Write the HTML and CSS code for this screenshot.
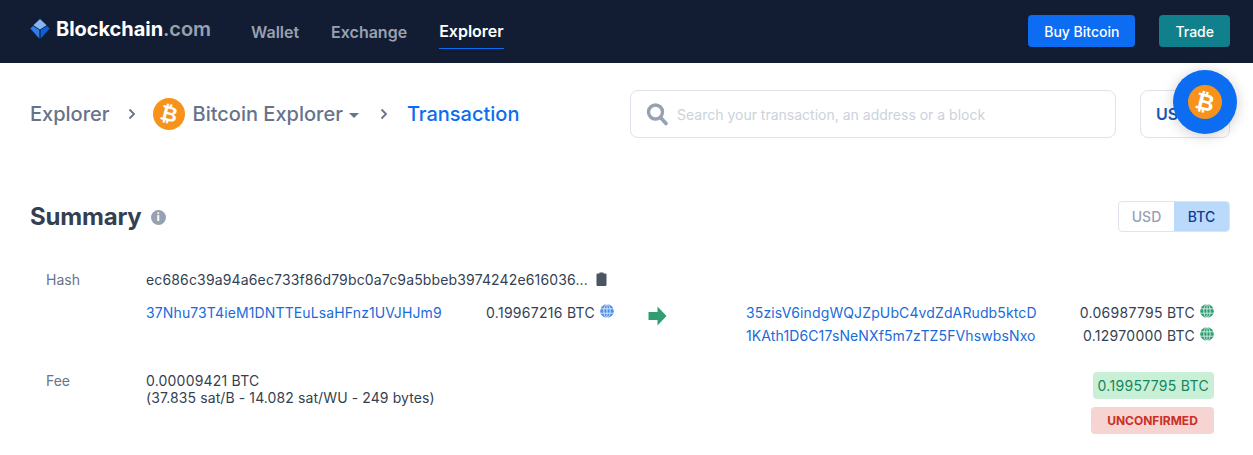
FILE: index.html
```html
<!DOCTYPE html>
<html lang="en">
<head>
  <meta charset="UTF-8" />
  <title>Bitcoin Transaction</title>
  <link rel="stylesheet" href="styles.css">
</head>
<body>

  <!-- Top bar -->
  <header class="topbar">
    <a class="logo" href="#">
      <svg class="logo-mark" viewBox="0 0 20 20" width="20" height="20">
        <path d="M10 0 L16.6 6.3 L10 10.4 L3.4 6.3 Z" fill="#85b5f5"/>
        <path d="M0.3 9.5 L3 6.9 L9.4 11 L9.4 19.8 Z" fill="#2f7be8"/>
        <path d="M19.7 9.5 L17 6.9 L10.6 11 L10.6 19.8 Z" fill="#0c5fd8"/>
      </svg>
      <span>Blockchain<span class="logo-tld">.com</span></span>
    </a>
    <nav class="topnav">
      <a href="#">Wallet</a>
      <a href="#">Exchange</a>
      <a href="#" class="active">Explorer</a>
    </nav>
    <div class="top-actions">
      <a href="#" class="btn btn-buy">Buy Bitcoin</a>
      <a href="#" class="btn btn-trade">Trade</a>
    </div>
  </header>

  <!-- Breadcrumb and search -->
  <section class="toolbar">
    <div class="crumbs">
      <span>Explorer</span>
      <svg class="chevron" viewBox="0 0 8 12" width="8" height="12"><path d="M1.5 1.5 L6 6 L1.5 10.5" fill="none" stroke="#677389" stroke-width="1.8"/></svg>
      <svg class="coin" viewBox="0 0 32 32" width="32" height="32">
        <circle cx="16" cy="16" r="16" fill="#f7931a"/>
        <text x="16" y="23" text-anchor="middle" transform="rotate(14 16 16)" class="coin-b">₿</text>
      </svg>
      <span class="crumb-coin">Bitcoin Explorer</span>
      <span class="caret"></span>
      <svg class="chevron" viewBox="0 0 8 12" width="8" height="12"><path d="M1.5 1.5 L6 6 L1.5 10.5" fill="none" stroke="#677389" stroke-width="1.8"/></svg>
      <a href="#" class="crumb-current">Transaction</a>
    </div>
    <div class="search">
      <svg viewBox="0 0 22 24" width="22" height="24"><circle cx="9.5" cy="10" r="7" fill="none" stroke="#98a1b2" stroke-width="3.4"/><path d="M14.5 15.5 L20 21.5" stroke="#98a1b2" stroke-width="3.6" stroke-linecap="round"/></svg>
      <span>Search your transaction, an address or a block</span>
    </div>
    <div class="currency">USD</div>
  </section>

  <!-- Floating coin button -->
  <div class="fab">
    <svg viewBox="0 0 34 34" width="34" height="34">
      <circle cx="17" cy="17" r="17" fill="#f7931a"/>
      <text x="17" y="25" text-anchor="middle" transform="rotate(14 17 17)" class="fab-b">₿</text>
    </svg>
  </div>

  <!-- Summary -->
  <main class="summary">
    <div class="summary-head">
      <h2>Summary</h2>
      <span class="info">i</span>
      <div class="toggle">
        <span>USD</span>
        <span class="on">BTC</span>
      </div>
    </div>

    <div class="row row-hash">
      <div class="label">Hash</div>
      <div class="hash">
        <span>ec686c39a94a6ec733f86d79bc0a7c9a5bbeb3974242e616036...</span>
        <svg viewBox="0 0 10 14" width="11" height="14"><path d="M3 1.5 V0.6 H7 V1.5 H9 Q10 1.5 10 2.5 V13 Q10 14 9 14 H1 Q0 14 0 13 V2.5 Q0 1.5 1 1.5 Z" fill="#4b5563"/></svg>
      </div>
    </div>

    <div class="row row-io">
      <div class="inputs">
        <a href="#">37Nhu73T4ieM1DNTTEuLsaHFnz1UVJHJm9</a>
        <span class="amount">0.19967216 BTC <svg class="globe globe-blue" viewBox="0 0 14 14" width="14" height="14"><use href="#globe-shape"/></svg></span>
      </div>
      <svg class="arrow" viewBox="0 0 20 20" width="21" height="20"><path d="M1 6 H10 V0.5 L19 10 L10 19.5 V14 H1 Z" fill="#2f9e73"/></svg>
      <div class="outputs">
        <div class="output">
          <a href="#">35zisV6indgWQJZpUbC4vdZdARudb5ktcD</a>
          <span class="amount">0.06987795 BTC <svg class="globe globe-green" viewBox="0 0 14 14" width="14" height="14"><use href="#globe-shape"/></svg></span>
        </div>
        <div class="output">
          <a href="#">1KAth1D6C17sNeNXf5m7zTZ5FVhswbsNxo</a>
          <span class="amount">0.12970000 BTC <svg class="globe globe-green" viewBox="0 0 14 14" width="14" height="14"><use href="#globe-shape"/></svg></span>
        </div>
      </div>
    </div>

    <div class="row row-fee">
      <div class="label">Fee</div>
      <div class="fee">
        <span class="fee-value">0.00009421 BTC</span><br>
        (37.835 sat/B - 14.082 sat/WU - 249 bytes)
      </div>
      <div class="totals">
        <span class="total">0.19957795 BTC</span>
        <span class="status">UNCONFIRMED</span>
      </div>
    </div>
  </main>

  <svg class="defs" width="0" height="0">
    <defs>
      <g id="globe-shape">
        <circle cx="7" cy="7" r="6.8" fill="currentColor"/>
        <ellipse cx="7" cy="7" rx="3.2" ry="6.8" fill="none" stroke="#fff" stroke-width="0.7"/>
        <path d="M7 0.2 V13.8 M0.5 4.8 H13.5 M0.5 9.2 H13.5" fill="none" stroke="#fff" stroke-width="0.7"/>
      </g>
    </defs>
  </svg>

</body>
</html>
```

FILE: styles.css
```css
body {
  margin: 0;
  background: #fff;
  font-family: Inter, "Liberation Sans", sans-serif;
  color: #353f52;
}

a {
  text-decoration: none;
}

.topbar {
  height: 63px;
  box-sizing: border-box;
  padding: 0 23px 0 30px;
  display: flex;
  align-items: center;
  background-color: #121d33;
}

.logo {
  display: flex;
  align-items: center;
  gap: 6px;
  width: 221px;
  margin-top: -5px;
  color: #fff;
  font-size: 20px;
  font-weight: 700;
  letter-spacing: -0.05px;
}

.logo-tld {
  color: #98a1b2;
  font-weight: 600;
}

.topnav {
  display: flex;
  gap: 32px;
  align-self: stretch;
}

.topnav a {
  display: flex;
  align-items: center;
  height: 49px;
  padding-top: 14px;
  box-sizing: border-box;
  color: #98a1b2;
  font-size: 16px;
  font-weight: 600;
}

.topnav a.active {
  color: #fff;
  border-bottom: 1px solid #0c6cf2;
}

.top-actions {
  margin-left: auto;
  display: flex;
  gap: 24px;
}

.btn {
  height: 32px;
  box-sizing: border-box;
  padding: 0 16px;
  margin-top: -1px;
  display: flex;
  align-items: center;
  border-radius: 4px;
  color: #fff;
  font-size: 14px;
  font-weight: 500;
}

.btn-buy {
  background-color: #0c6cf2;
}

.btn-trade {
  background-color: #10808c;
}

.toolbar {
  height: 48px;
  margin-top: 27px;
  padding: 0 23px 0 30px;
  display: flex;
  align-items: center;
}

.crumbs {
  display: flex;
  align-items: center;
  width: 600px;
  color: #677389;
  font-size: 20px;
  font-weight: 500;
}

.chevron {
  margin: 0 17px 0 18px;
}

.crumb-coin {
  margin-left: 8px;
}

.caret {
  margin: 3px 0 0 6px;
  border-left: 5px solid transparent;
  border-right: 5px solid transparent;
  border-top: 5px solid #677389;
}

.caret + .chevron {
  margin-left: 21px;
  margin-right: 19px;
}

.crumb-current {
  color: #0c6cf2;
}

.coin-b {
  fill: #fff;
  font-family: "DejaVu Sans", sans-serif;
  font-size: 21px;
  font-weight: 700;
}

.fab-b {
  fill: #fff;
  font-family: "DejaVu Sans", sans-serif;
  font-size: 23px;
  font-weight: 700;
}

.search {
  width: 486px;
  height: 48px;
  box-sizing: border-box;
  padding-left: 15px;
  display: flex;
  align-items: center;
  gap: 9px;
  border: 1px solid #dfe3eb;
  border-radius: 8px;
  color: #ccd2dc;
  font-size: 14px;
}

.currency {
  width: 90px;
  height: 48px;
  box-sizing: border-box;
  margin-left: 24px;
  padding-left: 15px;
  display: flex;
  align-items: center;
  border: 1px solid #dfe3eb;
  border-radius: 8px;
  color: #1557b5;
  font-size: 16px;
  font-weight: 600;
}

.fab {
  position: absolute;
  top: 70px;
  left: 1173px;
  width: 64px;
  height: 64px;
  display: flex;
  align-items: center;
  justify-content: center;
  border-radius: 50%;
  background-color: #0c6cf2;
  box-shadow: 0 2px 14px rgba(0, 0, 0, 0.2);
}

.summary {
  padding: 0 23px 0 30px;
  font-size: 14px;
}

.summary-head {
  height: 32px;
  margin-top: 62px;
  display: flex;
  align-items: center;
}

.summary-head h2 {
  margin: 0;
  font-size: 24px;
  font-weight: 700;
  letter-spacing: -0.2px;
  color: #353f52;
}

.info {
  width: 15px;
  height: 15px;
  margin: 2px 0 0 9px;
  display: flex;
  align-items: center;
  justify-content: center;
  border-radius: 50%;
  background-color: #98a1b2;
  color: #fff;
  font-size: 10px;
  font-weight: 800;
}

.toggle {
  margin-left: auto;
  display: flex;
  height: 31px;
  box-sizing: border-box;
  border: 1px solid #dfe3eb;
  border-radius: 4px;
  overflow: hidden;
  font-size: 14px;
  font-weight: 500;
}

.toggle span {
  width: 55px;
  display: flex;
  align-items: center;
  justify-content: center;
  color: #98a1b2;
}

.toggle .on {
  background-color: #bbdafb;
  color: #0a3d94;
}

.row {
  display: flex;
  padding-left: 16px;
}

.row-hash {
  margin-top: 37px;
  height: 20px;
  align-items: center;
}

.label {
  width: 100px;
  color: #677389;
}

.hash {
  display: flex;
  align-items: center;
  gap: 8px;
  letter-spacing: 0.15px;
}

.row-io {
  margin-top: 12px;
  padding-left: 116px;
  height: 58px;
  align-items: flex-start;
}

.inputs {
  width: 468px;
  display: flex;
  justify-content: space-between;
  align-items: center;
  height: 22px;
}

.row-io a {
  color: #1a6bd8;
  letter-spacing: 0.12px;
}

.amount {
  display: inline-flex;
  align-items: center;
  gap: 5px;
  letter-spacing: 0.28px;
}

.globe {
  margin-top: -3px;
}

.globe-blue {
  color: #4d8fe8;
}

.globe-green {
  color: #2f9e73;
}

.arrow {
  margin: 5px 0 0 33px;
}

.outputs {
  margin-left: 78px;
  width: 468px;
}

.output {
  height: 23px;
  display: flex;
  justify-content: space-between;
  align-items: center;
}

.row-fee {
  margin-top: 10px;
  align-items: flex-start;
}

.row-fee .label {
  padding-top: 3px;
  line-height: 17px;
}

.fee {
  line-height: 17px;
  padding-top: 3px;
  letter-spacing: 0.1px;
}

.fee-value {
  letter-spacing: 0.2px;
}

.totals {
  margin-top: 3px;
  margin-left: auto;
  margin-right: 16px;
  display: flex;
  flex-direction: column;
  align-items: flex-end;
  gap: 8px;
}

.total {
  height: 27px;
  padding: 0 5px;
  display: flex;
  align-items: center;
  border-radius: 4px;
  background-color: #c9efd7;
  color: #12875a;
  letter-spacing: 0.3px;
}

.status {
  width: 123px;
  height: 27px;
  display: flex;
  align-items: center;
  justify-content: center;
  border-radius: 4px;
  background-color: #f6d4d1;
  color: #c93028;
  font-size: 12px;
  font-weight: 700;
}

.defs {
  position: absolute;
}
```
